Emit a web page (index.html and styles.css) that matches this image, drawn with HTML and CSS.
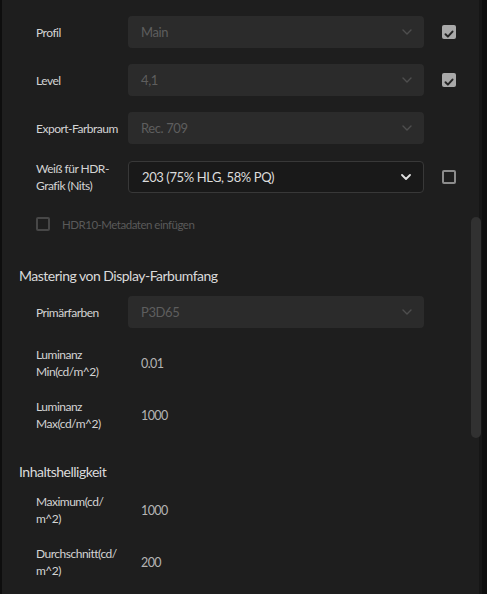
FILE: index.html
```html
<!DOCTYPE html>
<html lang="de">
<head>
  <meta charset="UTF-8" />
  <meta name="viewport" content="width=device-width, initial-scale=1.0"/>
  <title>Export-Einstellungen</title>
  <link rel="stylesheet" href="styles.css">
</head>
<body>
  <div class="panel">
    <div class="group">
      <!-- row scrolled out of view, only its bottom edge shows -->
      <div class="row">
        <div class="label"></div>
        <div class="select disabled"></div>
        <div class="check-slot"></div>
      </div>

      <div class="row">
        <div class="label">Profil</div>
        <div class="select disabled"><span>Main</span><svg class="chev" viewBox="0 0 10 6"><path d="M1 1l4 4 4-4"/></svg></div>
        <div class="check-slot"><span class="box checked"><svg viewBox="0 0 14 14"><path d="M3.5 7.2l2.4 2.4 4.6-5"/></svg></span></div>
      </div>

      <div class="row">
        <div class="label">Level</div>
        <div class="select disabled"><span>4,1</span><svg class="chev" viewBox="0 0 10 6"><path d="M1 1l4 4 4-4"/></svg></div>
        <div class="check-slot"><span class="box checked"><svg viewBox="0 0 14 14"><path d="M3.5 7.2l2.4 2.4 4.6-5"/></svg></span></div>
      </div>

      <div class="row">
        <div class="label">Export-Farbraum</div>
        <div class="select disabled"><span>Rec. 709</span><svg class="chev" viewBox="0 0 10 6"><path d="M1 1l4 4 4-4"/></svg></div>
        <div class="check-slot"></div>
      </div>

      <div class="row">
        <div class="label">Weiß für HDR-<br>Grafik (Nits)</div>
        <div class="select active"><span>203 (75% HLG, 58% PQ)</span><svg class="chev" viewBox="0 0 10 6"><path d="M1 1l4 4 4-4"/></svg></div>
        <div class="check-slot"><span class="box"></span></div>
      </div>

      <div class="option-row">
        <span class="box off"></span>
        <span>HDR10-Metadaten einfügen</span>
      </div>
    </div>

    <h3 class="section-title first">Mastering von Display-Farbumfang</h3>
    <div class="group wide">
      <div class="row">
        <div class="label">Primärfarben</div>
        <div class="select disabled"><span>P3D65</span><svg class="chev" viewBox="0 0 10 6"><path d="M1 1l4 4 4-4"/></svg></div>
        <div class="check-slot"></div>
      </div>
      <div class="row">
        <div class="label">Luminanz<br>Min(cd/m^2)</div>
        <div class="value">0.01</div>
      </div>
      <div class="row">
        <div class="label">Luminanz<br>Max(cd/m^2)</div>
        <div class="value">1000</div>
      </div>
    </div>

    <h3 class="section-title">Inhaltshelligkeit</h3>
    <div class="group wide">
      <div class="row">
        <div class="label">Maximum(cd/<br>m^2)</div>
        <div class="value">1000</div>
      </div>
      <div class="row">
        <div class="label">Durchschnitt(cd/<br>m^2)</div>
        <div class="value">200</div>
      </div>
    </div>
  </div>

  <div class="scrollbar"></div>
</body>
</html>
```

FILE: styles.css
```css
body {
  margin: 0;
  font-family: Lato, "Noto Sans", sans-serif;
  letter-spacing: -0.5px;
  background-color: #0e0e0e;
  color: #d6d6d6;
  height: 594px;
  overflow: hidden;
  display: flex;
}

.panel {
  width: 480px;
  margin-left: 2px;
  height: 100%;
  background-color: #1e1e1e;
  border-right: 3px solid #161616;
  box-sizing: border-box;
  overflow: hidden;
}

.group {
  display: flex;
  flex-direction: column;
  gap: 16px;
  margin-top: -32px;
}

.group.wide {
  margin-top: 0;
  gap: 18px;
}

.row {
  display: flex;
  align-items: center;
  min-height: 32px;
  padding-left: 34px;
}

.label {
  width: 92px;
  font-size: 12px;
  line-height: 17px;
  color: #d4d4d4;
  flex-shrink: 0;
}

.select {
  width: 296px;
  height: 32px;
  box-sizing: border-box;
  border-radius: 4px;
  display: flex;
  align-items: center;
  justify-content: space-between;
  padding: 0 12px 0 13px;
  font-size: 13px;
  letter-spacing: -0.4px;
}

.select.disabled {
  background-color: #2b2b2b;
  color: #5e5e5e;
}

.select.active {
  background-color: #191919;
  border: 1px solid #383838;
  color: #dcdcdc;
}

.chev {
  width: 10px;
  height: 6px;
  fill: none;
  stroke: #4e4e4e;
  stroke-width: 1.4;
  stroke-linecap: round;
  stroke-linejoin: round;
}

.select.active .chev {
  stroke: #e0e0e0;
  stroke-width: 1.8;
}

.check-slot {
  width: 14px;
  height: 14px;
  margin-left: 18px;
}

.box {
  display: block;
  flex-shrink: 0;
  width: 14px;
  height: 14px;
  box-sizing: border-box;
  border: 2px solid #8c8c8c;
  border-radius: 2px;
}

.box.checked {
  background-color: #a9a9a9;
  border: none;
}

.box svg {
  width: 14px;
  height: 14px;
  fill: none;
  stroke: #242424;
  stroke-width: 2;
  stroke-linecap: round;
  stroke-linejoin: round;
}

.box.off {
  border-color: #474747;
}

.option-row {
  display: flex;
  align-items: center;
  gap: 12px;
  height: 28px;
  padding-left: 34px;
  font-size: 11.5px;
  color: #5a5a5a;
}

.value {
  padding-left: 13px;
  font-size: 12.5px;
  letter-spacing: -0.6px;
  color: #b4b4b4;
}

.section-title {
  margin: 30px 0 11px 17px;
  font-size: 14px;
  font-weight: normal;
  line-height: 20px;
  color: #dadada;
}

.section-title.first {
  margin-top: 28px;
  margin-bottom: 10px;
}

.scrollbar {
  position: fixed;
  left: 471px;
  top: 217px;
  width: 10px;
  height: 221px;
  border-radius: 5px;
  background-color: #313131;
}
```
